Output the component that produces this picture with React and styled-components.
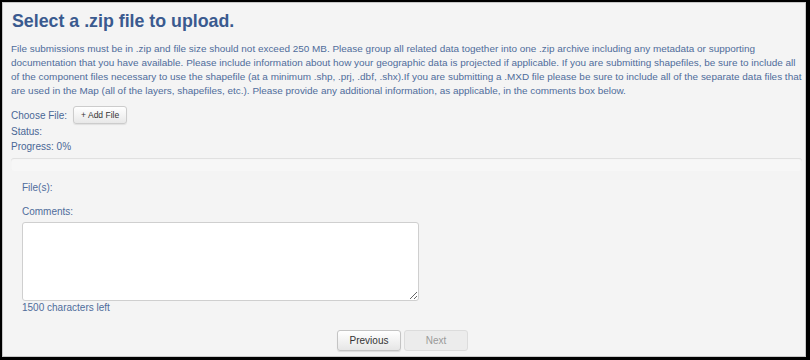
import React from "react";
import styled, { createGlobalStyle } from "styled-components";

const Global = createGlobalStyle`
  html, body { margin: 0; padding: 0; background: #000; }
  body { font-family: "Liberation Sans", Arial, sans-serif; }
`;

const Frame = styled.div`
  box-sizing: border-box;
  width: 810px;
  height: 360px;
  border-style: solid;
  border-color: #000;
  border-width: 2px 4px 3px 2px;
  background: #000;
  overflow: hidden;
`;

const Panel = styled.div`
  box-sizing: border-box;
  height: 100%;
  border: 1px solid #c8c8c8;
  background: #f4f4f4;
  padding: 6px 0 0 8px;
  color: #4a6796;
  font-size: 10px;
`;

const Title = styled.h1`
  margin: 0 0 0 1px;
  font-size: 17.8px;
  line-height: 24px;
  font-weight: bold;
  color: #3a5a8f;
`;

const Intro = styled.p`
  margin: 9px 0 0 0;
  font-size: 9.95px;
  line-height: 14px;
  color: #4f6c9b;
`;

const IntroLine = styled.span`
  display: block;
  white-space: nowrap;
`;

const FieldRow = styled.div`
  display: flex;
  align-items: center;
  gap: 6px;
  margin-top: ${(p) => p.$top || 0}px;
  height: ${(p) => p.$h || 15}px;
`;

const Label = styled.span`
  color: #4a6796;
  font-size: 10px;
`;

const SmallButton = styled.button`
  font-family: inherit;
  font-size: 8.5px;
  color: #333;
  width: 54px;
  height: 18px;
  padding: 0;
  border: 1px solid #ccc;
  border-radius: 3px;
  background: linear-gradient(#fff, #e8e8e8);
  box-shadow: 0 1px 1px rgba(0,0,0,0.08);
`;

const Progress = styled.div`
  margin: 4px 3px 0 0;
  height: 13px;
  border-radius: 3px;
  background: #f7f7f7;
  box-shadow: inset 0 1px 1px rgba(0,0,0,0.1);
`;

const Section = styled.div`
  padding-left: 11px;
  display: flex;
  flex-direction: column;
`;

const FieldLabel = styled.div`
  margin-top: ${(p) => p.$top}px;
  line-height: 14px;
  color: #4f6c9b;
`;

const TextArea = styled.textarea`
  box-sizing: border-box;
  width: 397px;
  height: 79px;
  margin-top: 3px;
  border: 1px solid #cfcfcf;
  border-radius: 3px;
  background: #fff;
  resize: both;
  display: block;
`;

const Counter = styled.div`
  line-height: 14px;
  color: #4f6c9b;
`;

const Nav = styled.div`
  display: flex;
  justify-content: center;
  gap: 3px;
  margin-top: 15px;
  padding-right: 22px;
`;

const NavButton = styled.button`
  font-family: inherit;
  font-size: 10px;
  width: 64px;
  height: 21px;
  padding: 0;
  border-radius: 3px;
  border: 1px solid ${(p) => (p.disabled ? "#dcdcdc" : "#c4c4c4")};
  color: ${(p) => (p.disabled ? "#9a9a9a" : "#333")};
  background: ${(p) => (p.disabled ? "#ececec" : "linear-gradient(#fff, #e6e6e6)")};
  box-shadow: ${(p) => (p.disabled ? "none" : "0 1px 1px rgba(0,0,0,0.1)")};
`;

const introLines = [
  "File submissions must be in .zip and file size should not exceed 250 MB. Please group all related data together into one .zip archive including any metadata or supporting",
  "documentation that you have available. Please include information about how your geographic data is projected if applicable. If you are submitting shapefiles, be sure to include all",
  "of the component files necessary to use the shapefile (at a minimum .shp, .prj, .dbf, .shx).If you are submitting a .MXD file please be sure to include all of the separate data files that",
  "are used in the Map (all of the layers, shapefiles, etc.). Please provide any additional information, as applicable, in the comments box below.",
];

export default function App() {
  return (
    <>
      <Global />
      <Frame>
        <Panel>
          <Title>Select a .zip file to upload.</Title>
          <Intro>
            {introLines.map((l, i) => (
              <IntroLine key={i}>{l}</IntroLine>
            ))}
          </Intro>
          <FieldRow $top={8} $h={18}>
            <Label>Choose File:</Label>
            <SmallButton>+ Add File</SmallButton>
          </FieldRow>
          <FieldRow>
            <Label>Status:</Label>
          </FieldRow>
          <FieldRow>
            <Label>Progress: 0%</Label>
          </FieldRow>
          <Progress />
          <Section>
            <FieldLabel $top={10}>File(s):</FieldLabel>
            <FieldLabel $top={10}>Comments:</FieldLabel>
            <TextArea />
            <Counter>1500 characters left</Counter>
            <Nav>
              <NavButton>Previous</NavButton>
              <NavButton disabled>Next</NavButton>
            </Nav>
          </Section>
        </Panel>
      </Frame>
    </>
  );
}
